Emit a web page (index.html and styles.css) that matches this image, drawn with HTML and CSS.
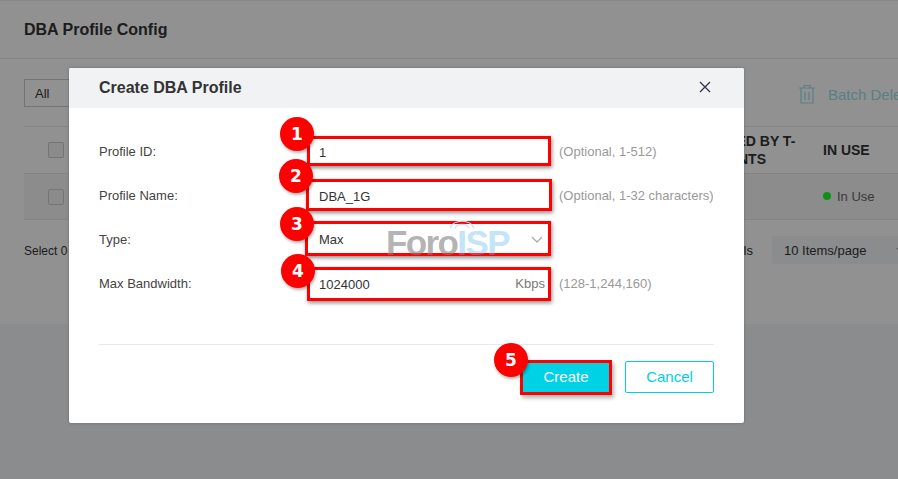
FILE: index.html
```html
<!DOCTYPE html>
<html lang="en">
<head>
<meta charset="utf-8">
<title>DBA Profile Config</title>
<link rel="stylesheet" href="styles.css">
</head>
<body>
<main class="card">
  <header class="card-head"><h1>DBA Profile Config</h1></header>
  <div class="toolbar">
    <div class="filter">All</div>
    <div class="batch">
      <svg class="trash" width="18" height="20" viewBox="0 0 18 20" fill="none" stroke="currentColor" stroke-width="1.2"><path d="M1 4h16M6 4V1.5h6V4M3 4v15h12V4M7 8v8M11 8v8"/></svg>
      <span>Batch Delete</span>
    </div>
  </div>
  <div class="table">
    <div class="tr th">
      <span class="check"></span>
      <span class="used">USED BY T-CONTS</span>
      <span>IN USE</span>
    </div>
    <div class="tr td">
      <span class="check"></span>
      <span></span>
      <span class="status"><i class="dot"></i>In Use</span>
    </div>
  </div>
  <div class="pager">
    <span class="selected">Select 0</span>
    <span class="total">1 Totals</span>
    <div class="size">10 Items/page<i class="caret"></i></div>
  </div>
</main>
<div class="overlay"></div>
<section class="modal">
  <header class="modal-head">
    <h2>Create DBA Profile</h2>
    <svg class="close" width="12" height="12" viewBox="0 0 12 12" stroke="#33334a" stroke-width="1.3"><path d="M1 1l10 10M11 1L1 11"/></svg>
  </header>
  <form class="form">
    <div class="row">
      <label>Profile ID:</label>
      <div class="field mark mark-1"><span class="val low">1</span><b class="badge">1</b></div>
      <span class="hint">(Optional, 1-512)</span>
    </div>
    <div class="row">
      <label>Profile Name:</label>
      <div class="field mark mark-2"><span class="val low">DBA_1G</span><b class="badge">2</b></div>
      <span class="hint">(Optional, 1-32 characters)</span>
    </div>
    <div class="row">
      <label>Type:</label>
      <div class="field mark mark-3"><span class="val">Max</span>
        <svg class="chev" width="12" height="7" viewBox="0 0 12 7" fill="none" stroke="#aaaeb3" stroke-width="1.4"><path d="M1 1l5 5 5-5"/></svg>
        <b class="badge">3</b></div>
    </div>
    <div class="row">
      <label>Max Bandwidth:</label>
      <div class="field mark mark-4"><span class="val low">1024000</span><span class="unit">Kbps</span><b class="badge">4</b></div>
      <span class="hint">(128-1,244,160)</span>
    </div>
  </form>
  <footer class="actions">
    <button type="button" class="btn primary">Create<b class="badge">5</b></button>
    <button type="button" class="btn ghost">Cancel</button>
  </footer>
  <div class="watermark">
    <svg class="signal" width="30" height="14" viewBox="0 0 30 14" fill="none" stroke="#bfe0f6" stroke-width="1.2"><path d="M3 12C7 3 23 3 27 12M8 12C11 7 19 7 22 12"/></svg>
    <span class="foro">Foro</span><span class="isp">ISP</span>
  </div>
</section>
</body>
</html>
```
FILE: styles.css
```css
* { box-sizing: border-box; }
html, body { margin: 0; height: 100%; }
body {
  width: 898px; height: 479px; overflow: hidden; position: relative;
  background: #f5f6f8;
  font-family: "Liberation Sans", Arial, sans-serif;
  font-size: 13px; color: #333;
}
.card { background: #fff; height: 324px; border-top: 1px solid #eee; overflow: hidden; }
.card-head { height: 58px; padding: 0 24px; display: flex; align-items: center; border-bottom: 1px solid #e8e8e8; }
.card-head h1 { margin: 0; font-size: 16px; font-weight: 700; color: #333; }
.toolbar { display: flex; align-items: center; justify-content: space-between; margin-top: 20px; height: 28px; padding-left: 24px; }
.filter { width: 60px; height: 28px; border: 1px solid #ccc; display: flex; align-items: center; padding-left: 10px; }
.batch { display: flex; align-items: center; gap: 12px; width: 100px; margin-top: 2px; white-space: nowrap; color: #9ae3ea; font-size: 15px; flex: none; }
.trash { color: #9ae3ea; flex: none; }
.table { margin: 19px 0 0 24px; border-top: 1px solid #e8e8e8; }
.tr { display: grid; grid-template-columns: 693px 106px 1fr; align-items: center; border-bottom: 1px solid #e8e8e8; height: 46px; }
.th { height: 47px; font-weight: 700; font-size: 14px; color: #333; line-height: 18px; }
.td { background: #f6f6f8; }
.used { display: block; width: 82px; }
.check { display: block; width: 16px; height: 16px; margin-left: 24px; border: 1px solid #ccc; border-radius: 2px; background: #f5f5f5; }
.status { display: flex; align-items: center; gap: 6px; margin-top: -1px; color: #666; }
.dot { width: 8px; height: 8px; border-radius: 50%; background: #14ff28; }
.pager { display: flex; align-items: center; height: 28px; margin-top: 16px; padding-left: 24px; font-size: 12px; }
.selected { margin-top: 1px; }
.total { margin-left: auto; margin-right: 19px; font-size: 13px; }
.size { width: 160px; height: 28px; margin-right: -34px; background: #f5f6f8; border-radius: 2px; display: flex; align-items: center; padding-left: 12px; font-size: 13px; flex: none; position: relative; }
.caret { position: absolute; left: 124px; top: 12px; border: 4px solid transparent; border-top-color: #999; }
.overlay { position: absolute; inset: 0; background: rgba(0, 0, 0, .43); }

.modal { position: absolute; left: 69px; top: 68px; width: 675px; height: 355px; background: #fff; border-radius: 2px; box-shadow: 0 0 3px rgba(0,0,0,.25); }
.modal-head { height: 40px; background: #f1f2f4; display: flex; align-items: center; justify-content: space-between; padding: 0 33px 0 30px; border-radius: 2px 2px 0 0; }
.modal-head h2 { margin: 0; font-size: 16px; font-weight: 700; color: #333; }
.close { display: block; margin-top: -2px; }
.form { padding: 21px 30px 0; }
.row { display: flex; align-items: center; height: 44px; }
.row label { width: 210px; flex: none; color: #444; }
.field { position: relative; width: 240px; height: 30px; background: #fff; display: flex; align-items: center; justify-content: space-between; padding: 0 4px 0 10px; flex: none; color: #333; }
.low { margin-top: 2px; }
.hint { margin-left: 10px; color: #999; }
.unit { color: #777; }
.chev { margin-right: 2px; }
.mark::after { content: ""; position: absolute; border: 3px solid #f00; box-shadow: 1px 2px 4px rgba(0,0,0,.45); pointer-events: none; }
.mark-1::after { left: -2px; right: -2px; top: 0; bottom: 0; }
.mark-2::after { left: -3px; right: -3px; top: -1px; bottom: -1px; }
.mark-3::after { left: -4px; right: -2px; top: -3px; bottom: -2px; }
.mark-4::after { left: -2px; right: -2px; top: -1px; bottom: -3px; }
.badge { position: absolute; z-index: 2; width: 34px; height: 34px; border-radius: 50%; background: #f00; color: #fff; font: 700 17px/34px "DejaVu Sans", sans-serif; text-align: center; box-shadow: 1px 2px 3px rgba(0,0,0,.3); }
.mark .badge { left: -29px; top: -19px; }
.mark-2 .badge { left: -30px; top: -21px; }
.mark-3 .badge { left: -29px; top: -17px; }
.mark-4 .badge { left: -28px; top: -14px; }
.actions { margin: 39px 30px 0; border-top: 1px solid #e8e8e8; padding-top: 16px; display: flex; justify-content: flex-end; align-items: flex-start; gap: 16px; }
.btn { position: relative; height: 32px; width: 89px; border-radius: 2px; font: 15px "Liberation Sans", Arial, sans-serif; padding: 0 0 2px; }
.primary { background: #00d2e6; color: #fff; border: 0; border-radius: 0; width: 86px; height: 29px; margin-top: 2px; outline: 3px solid #f00; box-shadow: 2px 3px 4px 3px rgba(0,0,0,.3); }
.ghost { background: #fff; color: #00cfe2; border: 1px solid #00cfe2; }
.primary .badge { left: -29px; top: -20px; }
.watermark { position: absolute; left: 317px; top: 153px; font: 700 35px/44px "Liberation Sans", Arial, sans-serif; letter-spacing: -1.6px; pointer-events: none; white-space: nowrap; }
.signal { position: absolute; left: 61px; top: -5px; }
.foro { color: rgba(130,130,130,.6); }
.isp { color: rgba(100,185,240,.4); }
```
